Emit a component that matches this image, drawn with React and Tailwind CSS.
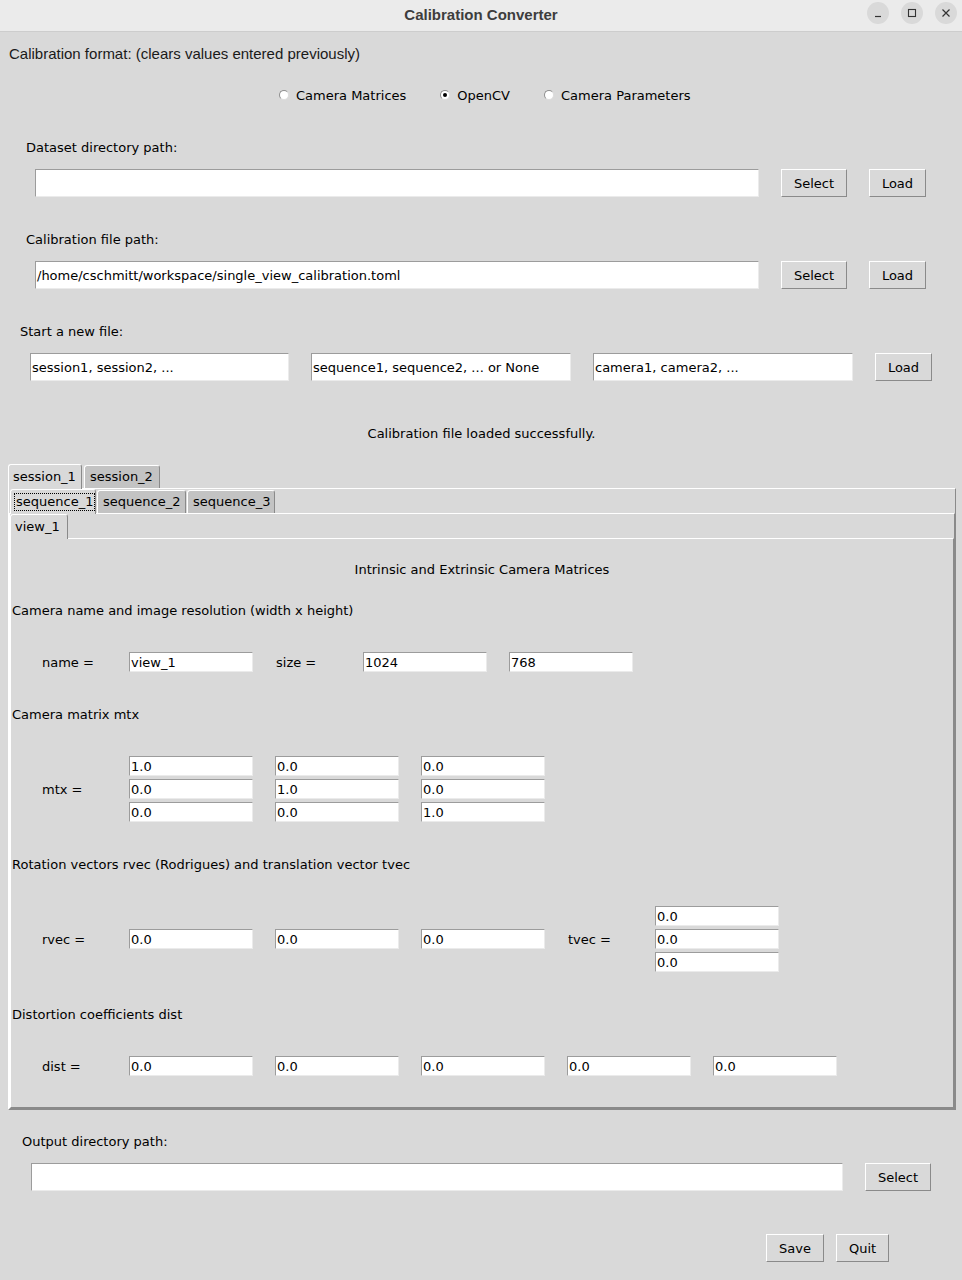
import React from "react";

const dv = { fontFamily: '"DejaVu Sans", sans-serif' };

function Entry({ w, h = 28, value = "" }) {
  return (
    <div
      className="bg-white border-t border-l border-t-[#9c9c9c] border-l-[#9c9c9c] border-r border-b border-r-[#ebebeb] border-b-[#ebebeb] flex items-center pl-[1px] text-[13px] text-black overflow-hidden whitespace-nowrap shrink-0"
      style={{ width: w, height: h }}
    >
      <span className="relative top-px">{value}</span>
    </div>
  );
}

function Btn({ w, label }) {
  return (
    <div
      className="h-[28px] bg-[#d9d9d9] border-t border-l border-t-white border-l-white border-r border-b border-r-[#8a8a8a] border-b-[#8a8a8a] flex items-center justify-center text-[13px] text-black shrink-0"
      style={{ width: w }}
    >
      <span className="relative top-px">{label}</span>
    </div>
  );
}

function Radio({ label, checked }) {
  return (
    <div className="flex items-center gap-[7px]">
      <div className="w-[10px] h-[10px] rounded-full bg-white border border-t-[#8e8e8e] border-l-[#8e8e8e] border-r-[#dcdcdc] border-b-[#dcdcdc] flex items-center justify-center">
        {checked && <div className="w-[4px] h-[4px] rounded-full bg-black" />}
      </div>
      <span className="text-[13px] text-black relative top-px">{label}</span>
    </div>
  );
}

function Tab({ label, selected, w, focus }) {
  if (selected) {
    return (
      <div
        className="relative z-10 -mb-px h-[25px] bg-[#d9d9d9] border-t border-l border-t-white border-l-white border-r border-r-[#8a8a8a] rounded-tl-[3px] rounded-tr-[3px] flex items-center pl-[3px] text-[13px] text-black shrink-0"
        style={{ width: w }}
      >
        <span className={focus ? "border border-dotted border-black px-px leading-[16px]" : "pl-[1px]"}>{label}</span>
      </div>
    );
  }
  return (
    <div
      className="h-[23px] bg-[#c3c3c3] border-t border-l border-t-white border-l-white border-r border-r-[#8a8a8a] rounded-tl-[3px] rounded-tr-[3px] flex items-center pl-[5px] text-[13px] text-black shrink-0"
      style={{ width: w }}
    >
      {label}
    </div>
  );
}

function Lbl({ children, w = 87 }) {
  return (
    <div className="shrink-0 text-[13px] text-black relative top-px" style={{ width: w }}>
      {children}
    </div>
  );
}

function E({ v }) {
  return <Entry w={124} h={20} value={v} />;
}

function TextRow({ children, className = "" }) {
  return (
    <div className={"h-[20px] flex items-center text-[13px] text-black " + className}>
      <span className="relative top-px">{children}</span>
    </div>
  );
}

export default function App() {
  return (
    <div className="w-[962px] h-[1280px] bg-[#d9d9d9] overflow-hidden text-black" style={dv}>
      {/* Title bar */}
      <div className="relative h-[32px] bg-[#ebebeb] border-b border-b-[#cdcdcd] flex items-center justify-center">
        <span className="text-[15px] font-bold text-[#3d3d3d]" style={{ fontFamily: '"Liberation Sans", Arial, sans-serif' }}>
          Calibration Converter
        </span>
        <div className="absolute right-[5px] top-[2px] flex gap-[12px]">
          <div className="w-[22px] h-[22px] rounded-full bg-[#d9d9d9] flex items-center justify-center">
            <svg width="10" height="10" viewBox="0 0 10 10"><line x1="2" y1="8.5" x2="8" y2="8.5" stroke="#333" strokeWidth="1.2" /></svg>
          </div>
          <div className="w-[22px] h-[22px] rounded-full bg-[#d9d9d9] flex items-center justify-center">
            <svg width="10" height="10" viewBox="0 0 10 10"><rect x="1.5" y="1.5" width="7" height="7" fill="none" stroke="#333" strokeWidth="1.1" /></svg>
          </div>
          <div className="w-[22px] h-[22px] rounded-full bg-[#d9d9d9] flex items-center justify-center">
            <svg width="10" height="10" viewBox="0 0 10 10"><path d="M1.5 1.5 L8.5 8.5 M8.5 1.5 L1.5 8.5" stroke="#333" strokeWidth="1.2" /></svg>
          </div>
        </div>
      </div>

      {/* Calibration format */}
      <div className="h-[42px] flex items-center pl-[9px] text-[15px] text-[#1a1a1a]" style={{ fontFamily: '"Liberation Sans", Arial, sans-serif' }}>
        <span className="relative top-px">Calibration format: (clears values entered previously)</span>
      </div>

      {/* Radios */}
      <div className="h-[42px] flex items-center pl-[279px] gap-[34px]">
        <Radio label="Camera Matrices" />
        <Radio label="OpenCV" checked />
        <Radio label="Camera Parameters" />
      </div>

      {/* Dataset directory */}
      <TextRow className="mt-[21px] pl-[26px]">Dataset directory path:</TextRow>
      <div className="mt-[12px] h-[28px] flex items-center pl-[35px]">
        <Entry w={724} />
        <div className="ml-[22px]"><Btn w={66} label="Select" /></div>
        <div className="ml-[22px]"><Btn w={57} label="Load" /></div>
      </div>

      {/* Calibration file */}
      <TextRow className="mt-[32px] pl-[26px]">Calibration file path:</TextRow>
      <div className="mt-[12px] h-[28px] flex items-center pl-[35px]">
        <Entry w={724} value="/home/cschmitt/workspace/single_view_calibration.toml" />
        <div className="ml-[22px]"><Btn w={66} label="Select" /></div>
        <div className="ml-[22px]"><Btn w={57} label="Load" /></div>
      </div>

      {/* Start a new file */}
      <TextRow className="mt-[32px] pl-[20px]">Start a new file:</TextRow>
      <div className="mt-[12px] h-[28px] flex items-center pl-[30px]">
        <Entry w={259} value="session1, session2, ..." />
        <div className="ml-[22px]"><Entry w={260} value="sequence1, sequence2, ... or None" /></div>
        <div className="ml-[22px]"><Entry w={260} value="camera1, camera2, ..." /></div>
        <div className="ml-[22px]"><Btn w={57} label="Load" /></div>
      </div>

      {/* Status */}
      <TextRow className="mt-[42px] justify-center pl-[1px]">Calibration file loaded successfully.</TextRow>

      {/* Notebook */}
      <div className="mt-[21px] ml-[8px] w-[948px]">
        <div className="h-[24px] flex items-end gap-[2px]">
          <Tab label="session_1" selected w={74} />
          <Tab label="session_2" w={76} />
        </div>
        <div className="border-t border-l border-t-white border-l-white border-r border-b border-r-[#8a8a8a] border-b-[#8a8a8a]">
          <div className="h-[24px] flex items-end pl-px gap-px">
            <Tab label="sequence_1" selected focus w={86} />
            <Tab label="sequence_2" w={89} />
            <Tab label="sequence_3" w={88} />
          </div>
          <div className="border-t border-l border-t-white border-l-white border-r border-b border-r-[#8a8a8a] border-b-[#8a8a8a]">
            <div className="h-[24px] flex items-end">
              <Tab label="view_1" selected w={58} />
            </div>
            <div className="border-t border-l border-t-white border-l-white border-r border-b border-r-[#8a8a8a] border-b-[#8a8a8a] pb-[31px]">
              <TextRow className="mt-[20px] justify-center">Intrinsic and Extrinsic Camera Matrices</TextRow>
              <TextRow className="mt-[21px] pl-px">Camera name and image resolution (width x height)</TextRow>

              {/* name row */}
              <div className="mt-[32px] flex items-center pl-[31px]">
                <Lbl>name =</Lbl>
                <E v="view_1" />
                <div className="ml-[23px]"><Lbl>size =</Lbl></div>
                <E v="1024" />
                <div className="ml-[22px]"><E v="768" /></div>
              </div>

              <TextRow className="mt-[32px] pl-px">Camera matrix mtx</TextRow>

              {/* mtx */}
              <div className="mt-[32px] flex items-center pl-[31px]">
                <Lbl>mtx =</Lbl>
                <div className="grid grid-cols-[124px_124px_124px] gap-x-[22px] gap-y-[3px]">
                  <E v="1.0" /><E v="0.0" /><E v="0.0" />
                  <E v="0.0" /><E v="1.0" /><E v="0.0" />
                  <E v="0.0" /><E v="0.0" /><E v="1.0" />
                </div>
              </div>

              <TextRow className="mt-[32px] pl-px">Rotation vectors rvec (Rodrigues) and translation vector tvec</TextRow>

              {/* rvec / tvec */}
              <div className="mt-[32px] flex items-center pl-[31px]">
                <Lbl>rvec =</Lbl>
                <div className="flex gap-[22px]">
                  <E v="0.0" /><E v="0.0" /><E v="0.0" />
                </div>
                <div className="ml-[23px]"><Lbl>tvec =</Lbl></div>
                <div className="flex flex-col gap-[3px]">
                  <E v="0.0" /><E v="0.0" /><E v="0.0" />
                </div>
              </div>

              <TextRow className="mt-[32px] pl-px">Distortion coefficients dist</TextRow>

              {/* dist */}
              <div className="mt-[32px] flex items-center pl-[31px]">
                <Lbl>dist =</Lbl>
                <div className="flex gap-[22px]">
                  <E v="0.0" /><E v="0.0" /><E v="0.0" /><E v="0.0" /><E v="0.0" />
                </div>
              </div>
            </div>
          </div>
        </div>
      </div>

      {/* Output directory */}
      <TextRow className="mt-[21px] pl-[22px]">Output directory path:</TextRow>
      <div className="mt-[12px] h-[28px] flex items-center pl-[31px]">
        <Entry w={812} />
        <div className="ml-[22px]"><Btn w={66} label="Select" /></div>
      </div>

      {/* Save / Quit */}
      <div className="mt-[43px] flex pl-[766px] gap-[12px]">
        <Btn w={58} label="Save" />
        <Btn w={53} label="Quit" />
      </div>
    </div>
  );
}
